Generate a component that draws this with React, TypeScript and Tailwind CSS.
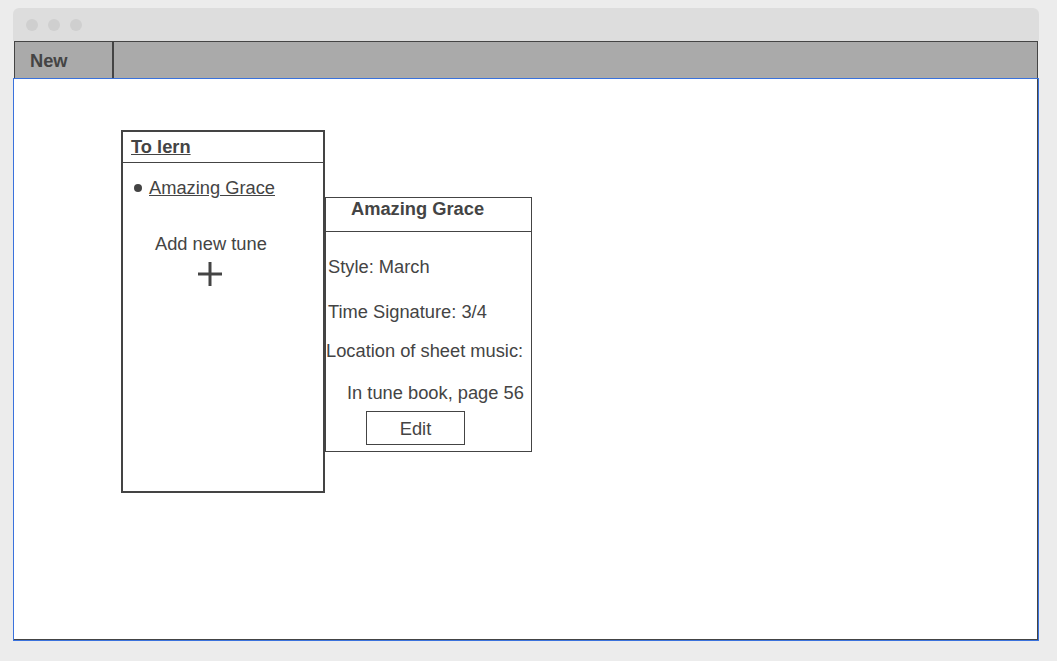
import React from "react";

export default function App() {
  return (
    <div
      className="min-h-screen bg-[#ececec] pt-2 pl-[13px] pr-[18px] text-[#444]"
      style={{ fontFamily: '"Liberation Sans", Arial, sans-serif' }}
    >
      <div className="flex w-[1026px] flex-col">
        {/* title bar */}
        <div className="flex h-[33px] items-center gap-[10px] rounded-t-md bg-[#dddddd] pl-[13px]">
          <span className="h-3 w-3 rounded-full bg-[#cfcfcf]" />
          <span className="h-3 w-3 rounded-full bg-[#cfcfcf]" />
          <span className="h-3 w-3 rounded-full bg-[#cfcfcf]" />
        </div>
        {/* toolbar */}
        <div className="ml-px mr-px flex h-[37px] border-l border-r border-t border-[#444] bg-[#aaaaaa]">
          <div className="flex w-[99px] items-center border-r-2 border-[#444] pl-[15px] pt-[1px] text-[18.3px] font-bold leading-[21px]">
            New
          </div>
        </div>
        {/* content */}
        <div className="h-[563px] border border-[#3a72dc] bg-white pl-[107px] pt-[51px] shadow-[inset_-1px_-1px_0_#444]">
          <div className="flex items-start">
            {/* left panel */}
            <div className="flex h-[363px] w-[204px] flex-col border-2 border-[#444]">
              <div className="flex h-[31px] items-center border-b border-[#444] pb-[2px] pl-[8px] text-[18.3px] font-bold leading-[21px] underline">
                To lern
              </div>
              <div className="mt-[14px] flex items-center gap-[7px] pl-[11px] text-[18.3px] leading-[21px]">
                <span className="h-2 w-2 rounded-full bg-[#444]" />
                <span className="underline">Amazing Grace</span>
              </div>
              <div className="mt-[35px] pl-[32px] text-[18.3px] leading-[21px]">Add new tune</div>
              <div className="mt-[7px] pl-[74px]">
                <svg width="26" height="26" viewBox="0 0 26 26">
                  <line x1="13" y1="1" x2="13" y2="25" stroke="#444" strokeWidth="3" />
                  <line x1="1" y1="13" x2="25" y2="13" stroke="#444" strokeWidth="3" />
                </svg>
              </div>
            </div>
            {/* right panel */}
            <div className="mt-[67px] flex w-[207px] flex-col border border-[#444] pb-[6px]">
              <div className="h-[34px] border-b border-[#444] pl-[25px] text-[18.3px] font-bold leading-[21px]">
                Amazing Grace
              </div>
              <div className="mt-[24px] pl-[2px] text-[18.3px] leading-[21px]">Style: March</div>
              <div className="mt-[24px] pl-[2px] text-[18.3px] leading-[21px]">Time Signature: 3/4</div>
              <div className="mt-[18px] text-[18.3px] leading-[21px]">Location of sheet music:</div>
              <div className="mt-[21px] pl-[21px] text-[18.3px] leading-[21px]">In tune book, page 56</div>
              <div className="mt-[8px] pl-[40px]">
                <div className="flex h-[34px] w-[99px] items-center justify-center border border-[#444] text-[18.3px] leading-[21px]">
                  Edit
                </div>
              </div>
            </div>
          </div>
        </div>
      </div>
    </div>
  );
}
